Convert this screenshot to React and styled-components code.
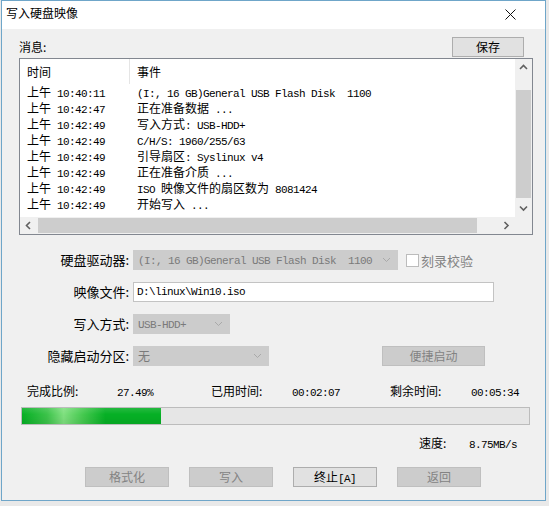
import React from 'react';
import styled, { createGlobalStyle } from 'styled-components';

const GlobalStyle = createGlobalStyle`
  html, body {
    margin: 0;
    padding: 0;
    background: #e9e9e9;
  }
  body {
    font-family: "Noto Sans CJK SC", sans-serif;
    font-size: 12px;
    color: #000;
  }
`;

const Screen = styled.div`
  width: 549px;
  height: 506px;
  background: #e9e9e9;
  overflow: hidden;
`;

const Window = styled.div`
  width: 545px;
  height: 501px;
  margin-left: 1px;
  box-sizing: border-box;
  border: 1px solid #6fa6c9;
  background: #f0f0f0;
  display: flex;
  flex-direction: column;
`;

const TitleBar = styled.div`
  height: 28px;
  background: #fff;
  display: flex;
  align-items: flex-start;
  justify-content: space-between;
  padding: 4px 0 0 4px;
  box-sizing: border-box;
  line-height: 16px;
`;

const Close = styled.div`
  width: 46px;
  height: 18px;
  display: flex;
  align-items: center;
  justify-content: center;
  margin-right: 12px;
`;

const Body = styled.div`
  padding: 0 0 0 17px;
  display: flex;
  flex-direction: column;
`;

const MsgHeader = styled.div`
  display: flex;
  align-items: center;
  justify-content: space-between;
  width: 505px;
  margin-top: 8px;
  line-height: 16px;
`;

const Latin = styled.span`
  font-family: "Liberation Mono", monospace;
  font-size: 11px;
  letter-spacing: -0.6px;
  white-space: pre;
`;

const mixed = (text) =>
  text
    .split(/([\u2E80-\u9FFF\uFF00-\uFFEF]+)/)
    .filter(Boolean)
    .map((part, i) =>
      /[\u2E80-\u9FFF\uFF00-\uFFEF]/.test(part) ? <span key={i}>{part}</span> : <Latin key={i}>{part}</Latin>
    );

const Button = styled.button`
  width: ${(p) => p.$w || 84}px;
  height: 20px;
  box-sizing: border-box;
  padding: 0;
  font-family: "Noto Sans CJK SC", sans-serif;
  font-size: 12px;
  line-height: 18px;
  border: 1px solid ${(p) => (p.disabled ? '#bfbfbf' : '#adadad')};
  background: ${(p) => (p.disabled ? '#cccccc' : '#e1e1e1')};
  color: ${(p) => (p.disabled ? '#838383' : '#000')};
`;

const LogBox = styled.div`
  margin-top: 1px;
  width: 514px;
  height: 177px;
  box-sizing: border-box;
  border: 1px solid #828790;
  background: #fff;
  display: grid;
  grid-template-columns: 1fr 17px;
  grid-template-rows: 1fr 17px;
`;

const LogList = styled.div`
  overflow: hidden;
`;

const LogRow = styled.div`
  display: grid;
  grid-template-columns: 110px 1fr;
  height: ${(p) => (p.$head ? 25 : 16)}px;
  line-height: ${(p) => (p.$head ? 25 : 16)}px;
  white-space: nowrap;
`;

const Cell = styled.div`
  padding-left: 7px;
  border-right: ${(p) => (p.$sep ? '1px solid #e5e5e5' : 'none')};
  overflow: hidden;
`;

const VScroll = styled.div`
  background: #f0f0f0;
  display: flex;
  flex-direction: column;
  align-items: center;
`;

const HScroll = styled.div`
  background: #f0f0f0;
  display: flex;
  align-items: center;
`;

const Arrow = styled.div`
  width: 17px;
  height: 17px;
  flex: none;
  display: flex;
  align-items: center;
  justify-content: center;
`;

const VThumb = styled.div`
  margin-top: 14px;
  width: 15px;
  height: 108px;
  background: #cdcdcd;
`;

const Spacer = styled.div`
  flex: 1;
`;

const HThumb = styled.div`
  margin-left: 1px;
  height: 15px;
  width: 439px;
  background: #cdcdcd;
`;

const Corner = styled.div`
  background: #f0f0f0;
`;

const Form = styled.div`
  margin-top: 15px;
  display: grid;
  grid-template-columns: 110px auto;
  column-gap: 4px;
  row-gap: 12px;
  align-items: center;
`;

const Label = styled.div`
  text-align: right;
  font-size: 13px;
  line-height: 20px;
  white-space: nowrap;
`;

const Field = styled.div`
  display: flex;
  align-items: center;
  height: 20px;
`;

const Combo = styled.div`
  width: ${(p) => p.$w}px;
  height: 20px;
  box-sizing: border-box;
  border: 1px solid #cccccc;
  background: #cccccc;
  color: #7a7a7a;
  display: flex;
  align-items: center;
  padding: 0 6px 0 4px;
  line-height: 18px;
  white-space: nowrap;
  overflow: hidden;
  flex: none;
`;

const ComboText = styled.div`
  flex: 1;
  overflow: hidden;
`;

const TextInput = styled.input`
  width: 361px;
  height: 20px;
  box-sizing: border-box;
  border: 1px solid #c3c3c3;
  background: #fff;
  padding: 0 0 0 3px;
  margin: 0;
  font-family: "Liberation Mono", monospace;
  font-size: 11px;
  letter-spacing: -0.6px;
  color: #000;
  outline: none;
`;

const CheckWrap = styled.label`
  display: flex;
  align-items: center;
  margin-left: 8px;
  font-size: 13px;
  color: #838383;
`;

const CheckBox = styled.span`
  width: 13px;
  height: 13px;
  box-sizing: border-box;
  border: 1px solid #bcbcbc;
  background: #fff;
  margin-right: 2px;
`;

const Stats = styled.div`
  margin-top: 17px;
  padding-left: 8px;
  display: grid;
  grid-template-columns: 90px 94px 81px 98px 81px auto;
  line-height: 16px;
  white-space: nowrap;
`;

const Progress = styled.div`
  margin: 6px 0 0 2px;
  width: 509px;
  height: 18px;
  box-sizing: border-box;
  border: 1px solid #bcbcbc;
  background: #e6e6e6;
`;

const ProgressFill = styled.div`
  height: 100%;
  background:
    linear-gradient(to bottom, rgba(255,255,255,0.12), rgba(0,0,0,0) 40%, rgba(0,0,0,0.06)),
    linear-gradient(to right, #06b025 0%, #3cc34a 18%, #7fe07f 30%, #45c94f 44%, #06b025 60%, #06b025 100%);
`;

const SpeedRow = styled.div`
  margin-top: 10px;
  display: grid;
  grid-template-columns: 50px 50px;
  padding-left: 400px;
  line-height: 16px;
`;

const ButtonRow = styled.div`
  margin-top: 14px;
  padding-left: 66px;
  display: flex;
  gap: 20px;
`;

const Chevron = ({ dir }) => {
  const paths = {
    up: 'M1 5 L4.5 1.5 L8 5',
    down: 'M1 1.5 L4.5 5 L8 1.5',
    left: 'M5 1 L1.5 4.5 L5 8',
    right: 'M1.5 1 L5 4.5 L1.5 8',
  };
  const vert = dir === 'up' || dir === 'down';
  return (
    <svg width={vert ? 9 : 7} height={vert ? 7 : 9} viewBox={vert ? '0 0 9 7' : '0 0 7 9'}>
      <path d={paths[dir]} fill="none" stroke="#606060" strokeWidth="1.6" />
    </svg>
  );
};

const ComboArrow = () => (
  <svg width="9" height="6" viewBox="0 0 9 6">
    <path d="M1 1 L4.5 4.5 L8 1" fill="none" stroke="#a9a9a9" strokeWidth="1" />
  </svg>
);

const logs = [
  ['上午 10:40:11', '(I:, 16 GB)General USB Flash Disk  1100'],
  ['上午 10:42:47', '正在准备数据 ...'],
  ['上午 10:42:49', '写入方式: USB-HDD+'],
  ['上午 10:42:49', 'C/H/S: 1960/255/63'],
  ['上午 10:42:49', '引导扇区: Syslinux v4'],
  ['上午 10:42:49', '正在准备介质 ...'],
  ['上午 10:42:49', 'ISO 映像文件的扇区数为 8081424'],
  ['上午 10:42:49', '开始写入 ...'],
];

const App = () => {
  const percent = 27.49;
  return (
    <Screen>
      <GlobalStyle />
      <Window>
        <TitleBar>
          <span>写入硬盘映像</span>
          <Close>
            <svg width="11" height="11" viewBox="0 0 11 11">
              <path d="M0.5 0.5 L10.5 10.5 M10.5 0.5 L0.5 10.5" stroke="#111" strokeWidth="1" />
            </svg>
          </Close>
        </TitleBar>
        <Body>
          <MsgHeader>
            <span>消息:</span>
            <Button $w={72}>保存</Button>
          </MsgHeader>
          <LogBox>
            <LogList>
              <LogRow $head>
                <Cell $sep>时间</Cell>
                <Cell>事件</Cell>
              </LogRow>
              {logs.map(([time, event], i) => (
                <LogRow key={i}>
                  <Cell>{mixed(time)}</Cell>
                  <Cell>{mixed(event)}</Cell>
                </LogRow>
              ))}
            </LogList>
            <VScroll>
              <Arrow><Chevron dir="up" /></Arrow>
              <VThumb />
              <Spacer />
              <Arrow><Chevron dir="down" /></Arrow>
            </VScroll>
            <HScroll>
              <Arrow><Chevron dir="left" /></Arrow>
              <HThumb />
              <Spacer />
              <Arrow><Chevron dir="right" /></Arrow>
            </HScroll>
            <Corner />
          </LogBox>

          <Form>
            <Label>硬盘驱动器:</Label>
            <Field>
              <Combo $w={265}>
                <ComboText>{mixed('(I:, 16 GB)General USB Flash Disk  1100')}</ComboText>
                <ComboArrow />
              </Combo>
              <CheckWrap>
                <CheckBox />
                刻录校验
              </CheckWrap>
            </Field>

            <Label>映像文件:</Label>
            <Field>
              <TextInput readOnly value={'D:\\linux\\Win10.iso'} />
            </Field>

            <Label>写入方式:</Label>
            <Field>
              <Combo $w={97}>
                <ComboText>{mixed('USB-HDD+')}</ComboText>
                <ComboArrow />
              </Combo>
            </Field>

            <Label>隐藏启动分区:</Label>
            <Field>
              <Combo $w={136}>
                <ComboText>无</ComboText>
                <ComboArrow />
              </Combo>
              <Button $w={103} disabled style={{ marginLeft: 113 }}>便捷启动</Button>
            </Field>
          </Form>

          <Stats>
            <span>完成比例:</span>
            <span>{mixed(`${percent}%`)}</span>
            <span>已用时间:</span>
            <span>{mixed('00:02:07')}</span>
            <span>剩余时间:</span>
            <span>{mixed('00:05:34')}</span>
          </Stats>

          <Progress>
            <ProgressFill style={{ width: `${percent}%` }} />
          </Progress>

          <SpeedRow>
            <span>速度:</span>
            <span>{mixed('8.75MB/s')}</span>
          </SpeedRow>

          <ButtonRow>
            <Button disabled>格式化</Button>
            <Button disabled>写入</Button>
            <Button>{mixed('终止[A]')}</Button>
            <Button disabled>返回</Button>
          </ButtonRow>
        </Body>
      </Window>
    </Screen>
  );
};

export default App;
